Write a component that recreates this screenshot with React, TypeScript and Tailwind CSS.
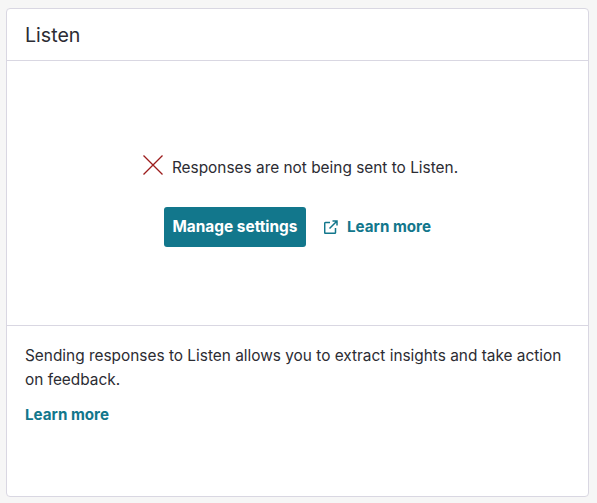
export default function App() {
  return (
    <div className="h-[503px] w-[597px] bg-[#f6f6f6] pt-[8px] pl-[6px] pr-[8px] pb-[6px] font-['Inter',sans-serif] text-[#2c2c33]">
      <div className="flex h-[489px] flex-col rounded-[4px] border border-[#d9d7e2] bg-white">
        {/* Header */}
        <div className="flex h-[52px] items-center border-b border-[#d9d7e2] px-[18px] pt-[2px] text-[19.6px]">Listen</div>

        {/* Status */}
        <div className="flex h-[265px] flex-col items-center border-b border-[#d9d7e2] pt-[93px]">
          <div className="ml-[5px] flex items-center gap-[8px] text-[15.4px] leading-[24px]">
            <svg width="22" height="22" viewBox="0 0 22 22" fill="none" stroke="#9c1c1c" strokeWidth="1.3" className="mb-[5px]">
              <path d="M1.5 1.5 L20.5 20.5 M20.5 1.5 L1.5 20.5" />
            </svg>
            <span>Responses are not being sent to Listen.</span>
          </div>
          <div className="mt-[26px] flex items-center gap-[18px]">
            <button className="h-[40px] w-[142px] rounded-[3px] bg-[#12778c] text-[15.4px] font-bold text-white">Manage settings</button>
            <a className="flex items-center gap-[9px] text-[15.2px] font-bold text-[#12778c]">
              <svg width="14" height="14" viewBox="0 0 14 14" fill="none" stroke="#12778c" strokeWidth="1.5">
                <path d="M11.5 8 V12.5 a0.8 0.8 0 0 1 -0.8 0.8 H1.5 a0.8 0.8 0 0 1 -0.8 -0.8 V3.3 a0.8 0.8 0 0 1 0.8 -0.8 H6" />
                <path d="M5.5 8.5 L13 1 M8.5 1 H13 V5.5" />
              </svg>
              Learn more
            </a>
          </div>
        </div>

        {/* Footer text */}
        <div className="px-[18px] pt-[18px] text-[15.4px] leading-[24px]">
          <p>Sending responses to Listen allows you to extract insights and take action on feedback.</p>
          <a className="mt-[11px] block text-[15.2px] font-bold text-[#12778c]">Learn more</a>
        </div>
      </div>
    </div>
  )
}
